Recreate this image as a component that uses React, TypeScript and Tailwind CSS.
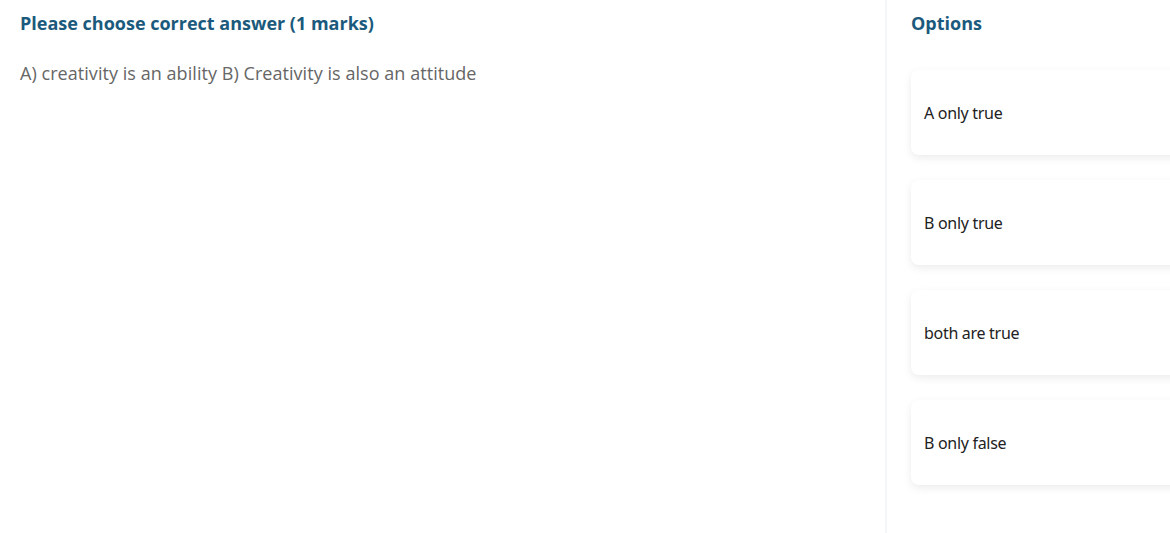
import React from 'react'

const options = ['A only true', 'B only true', 'both are true', 'B only false']

export default function App() {
  return (
    <div className="flex h-[533px] w-[1170px] overflow-hidden bg-white" style={{ fontFamily: '"Open Sans", sans-serif' }}>
      {/* Question */}
      <div className="w-[887px] shrink-0 border-r-2 border-[#f4f6f7] px-5 pt-3">
        <h2 className="text-[18px] font-bold leading-[22px] text-[#1b5a7c]">Please choose correct answer (1 marks)</h2>
        <p className="mt-[28px] text-[18px] leading-[22px] tracking-[0.05px] text-[#666]">
          A) creativity is an ability B) Creativity is also an attitude
        </p>
      </div>

      {/* Options */}
      <div className="shrink-0 pl-6 pt-3">
        <h2 className="text-[18px] font-bold leading-[22px] text-[#1b5a7c]">Options</h2>
        <div className="mt-[36px] flex flex-col gap-[25px]">
          {options.map((opt) => (
            <div
              key={opt}
              className="flex h-[85px] w-[300px] items-center rounded-lg bg-white px-[13px] text-[16px] tracking-[-0.3px] text-[#222] shadow-[0_3px_8px_rgba(0,0,0,0.08)]"
              style={{ fontFamily: '"Noto Sans", sans-serif' }}
            >
              {opt}
            </div>
          ))}
        </div>
      </div>
    </div>
  )
}
